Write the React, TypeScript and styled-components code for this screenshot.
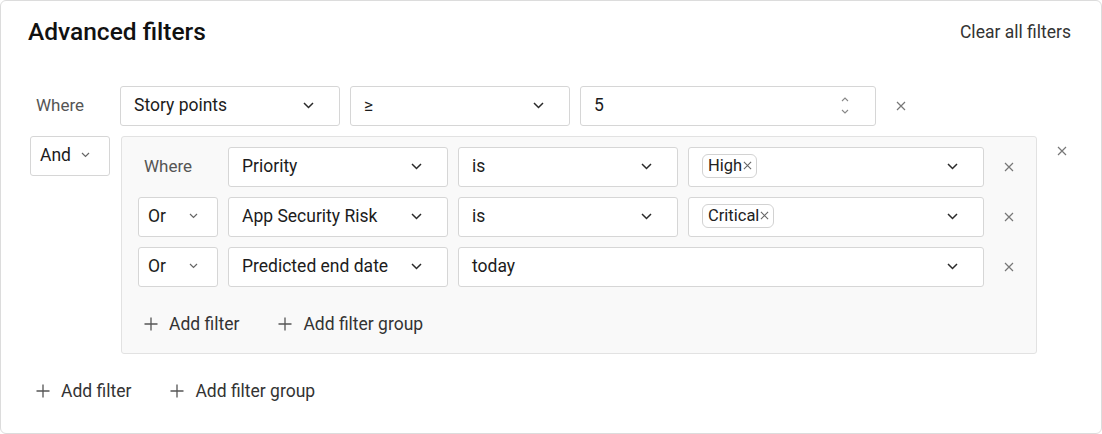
import React from "react";
import styled, { createGlobalStyle } from "styled-components";

const GlobalStyle = createGlobalStyle`
  * { box-sizing: border-box; }
  body {
    margin: 0;
    font-family: Roboto, "Noto Sans", "Liberation Sans", sans-serif;
    color: #1c1c1c;
    background: #fff;
  }
`;

const Card = styled.section`
  width: 1102px;
  height: 434px;
  border: 1px solid #dcdcdc;
  border-radius: 6px;
  padding: 16px 30px 0 27px;
  background: #fff;
`;

const Header = styled.header`
  display: flex;
  align-items: center;
  justify-content: space-between;
  height: 30px;
`;

const Title = styled.h2`
  margin: 0;
  font-size: 24.5px;
  line-height: 30px;
  font-weight: 500;
  color: #111;
`;

const ClearLink = styled.button`
  border: none;
  background: none;
  padding: 0;
  font: inherit;
  font-size: 17.5px;
  color: #333;
  cursor: pointer;
`;

const Body = styled.div`
  display: flex;
  flex-direction: column;
  gap: 10px;
  margin-top: 39px;
  padding-left: 2px;
`;

const Row = styled.div<{ $top?: boolean }>`
  display: flex;
  gap: 10px;
  align-items: ${(p) => (p.$top ? "flex-start" : "center")};
`;

const LeadLabel = styled.div`
  width: 80px;
  flex: none;
  padding-left: 6px;
  padding-bottom: 3px;
  font-size: 17px;
  color: #555;
`;

const Select = styled.div<{ $w: number; $compact?: boolean }>`
  width: ${(p) => p.$w}px;
  flex: none;
  height: 40px;
  display: flex;
  align-items: center;
  justify-content: space-between;
  padding: ${(p) => (p.$compact ? "0 19px 2px 9px" : "0 25px 2px 13px")};
  border: 1px solid #d6d6d6;
  border-radius: 3px;
  background: #fff;
  font-size: 17.5px;
  color: #1c1c1c;
`;

const Value = styled.span`
  white-space: nowrap;
`;

const Tag = styled.span`
  display: inline-flex;
  align-items: center;
  gap: 1px;
  height: 24px;
  padding: 0 4px 1px 5px;
  border: 1px solid #d2d2d2;
  border-radius: 6px;
  font-size: 16.5px;
  color: #222;
  background: #fff;
`;

const RemoveButton = styled.button`
  width: 30px;
  height: 30px;
  flex: none;
  display: flex;
  align-items: center;
  justify-content: center;
  border: none;
  background: none;
  padding: 0;
  cursor: pointer;
`;

const Group = styled.div`
  width: 916px;
  flex: none;
  margin-left: 1px;
  background: #f9f9f9;
  border: 1px solid #e2e2e2;
  border-radius: 3px;
  padding: 10px 10px 11px 16px;
  display: flex;
  flex-direction: column;
  gap: 10px;
`;

const AddRow = styled.div<{ $mt: number }>`
  display: flex;
  gap: 27px;
  margin-top: ${(p) => p.$mt}px;
`;

const AddButton = styled.button`
  height: 36px;
  display: flex;
  align-items: center;
  gap: 11px;
  padding: 0 6px;
  border: none;
  background: none;
  font: inherit;
  font-size: 17.5px;
  color: #333;
  cursor: pointer;
`;

const Spinner = styled.span`
  display: flex;
  flex-direction: column;
  gap: 7px;
  margin-right: 1px;
`;

const Chevron = ({ light }: { light?: boolean }) => (
  <svg width={light ? 9 : 11} height={light ? 6 : 7} viewBox={light ? "0 0 9 6" : "0 0 11 7"}>
    <path
      d={light ? "M1 1L4.5 4.5L8 1" : "M1 1L5.5 5.5L10 1"}
      fill="none"
      stroke={light ? "#666" : "#2a2a2a"}
      strokeWidth={light ? 1.2 : 1.5}
    />
  </svg>
);

const CloseIcon = ({ size = 10, color = "#777" }: { size?: number; color?: string }) => (
  <svg width={size} height={size} viewBox="0 0 10 10">
    <path d="M1 1L9 9M9 1L1 9" stroke={color} strokeWidth={1.2} fill="none" />
  </svg>
);

const PlusIcon = () => (
  <svg width="14" height="14" viewBox="0 0 14 14">
    <path d="M7 0.5V13.5M0.5 7H13.5" stroke="#555" strokeWidth={1.3} fill="none" />
  </svg>
);

const Caret = ({ up }: { up?: boolean }) => (
  <svg width="8" height="5" viewBox="0 0 8 5">
    <path d={up ? "M1 4L4 1L7 4" : "M1 1L4 4L7 1"} stroke="#888" strokeWidth={1.1} fill="none" />
  </svg>
);

type Cond = {
  lead: string;
  field: string;
  op?: string;
  value?: string;
  tag?: string;
};

const groupRows: Cond[] = [
  { lead: "Where", field: "Priority", op: "is", tag: "High" },
  { lead: "Or", field: "App Security Risk", op: "is", tag: "Critical" },
  { lead: "Or", field: "Predicted end date", value: "today" },
];

function Lead({ text }: { text: string }) {
  if (text === "Where") return <LeadLabel>Where</LeadLabel>;
  return (
    <Select $w={80} $compact>
      <Value>{text}</Value>
      <Chevron light />
    </Select>
  );
}

function ConditionRow({ c }: { c: Cond }) {
  return (
    <Row>
      <Lead text={c.lead} />
      <Select $w={220}>
        <Value>{c.field}</Value>
        <Chevron />
      </Select>
      {c.op ? (
        <>
          <Select $w={220}>
            <Value>{c.op}</Value>
            <Chevron />
          </Select>
          <Select $w={296}>
            <Tag>
              {c.tag}
              <CloseIcon size={9} color="#666" />
            </Tag>
            <Chevron />
          </Select>
        </>
      ) : (
        <Select $w={526}>
          <Value>{c.value}</Value>
          <Chevron />
        </Select>
      )}
      <RemoveButton aria-label="Remove">
        <CloseIcon />
      </RemoveButton>
    </Row>
  );
}

function AddActions({ mt }: { mt: number }) {
  return (
    <AddRow $mt={mt}>
      <AddButton>
        <PlusIcon />
        Add filter
      </AddButton>
      <AddButton>
        <PlusIcon />
        Add filter group
      </AddButton>
    </AddRow>
  );
}

export default function App() {
  return (
    <>
      <GlobalStyle />
      <Card>
        <Header>
          <Title>Advanced filters</Title>
          <ClearLink>Clear all filters</ClearLink>
        </Header>
        <Body>
          <Row>
            <LeadLabel>Where</LeadLabel>
            <Select $w={220}>
              <Value>Story points</Value>
              <Chevron />
            </Select>
            <Select $w={220}>
              <Value>≥</Value>
              <Chevron />
            </Select>
            <Select $w={296}>
              <Value>5</Value>
              <Spinner>
                <Caret up />
                <Caret />
              </Spinner>
            </Select>
            <RemoveButton aria-label="Remove">
              <CloseIcon />
            </RemoveButton>
          </Row>
          <Row $top>
            <Lead text="And" />
            <Group>
              {groupRows.map((c, i) => (
                <ConditionRow key={i} c={c} />
              ))}
              <AddActions mt={9} />
            </Group>
            <RemoveButton aria-label="Remove group">
              <CloseIcon />
            </RemoveButton>
          </Row>
          <AddActions mt={9} />
        </Body>
      </Card>
    </>
  );
}
